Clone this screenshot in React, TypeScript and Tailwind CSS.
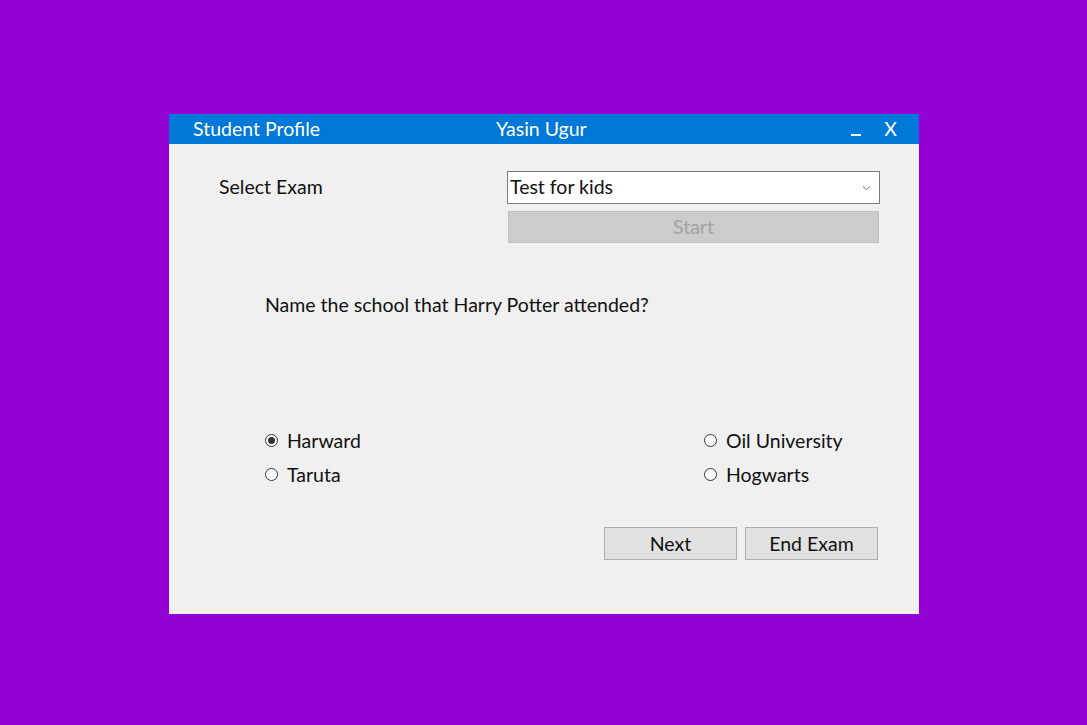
import React from "react";

const font = { fontFamily: "Lato, 'Noto Sans', sans-serif" };

function Radio({ label, checked }: { label: string; checked?: boolean }) {
  return (
    <label className="flex items-center gap-[9px] h-[34px] text-[19.5px] text-[#111]">
      <span className="w-[13px] h-[13px] rounded-full border border-[#333] bg-white flex items-center justify-center">
        {checked && <span className="w-[7px] h-[7px] rounded-full bg-[#333]" />}
      </span>
      <span>{label}</span>
    </label>
  );
}

export default function App() {
  return (
    <div className="min-h-screen bg-[#9400d3] pt-[114px] pl-[169px]" style={font}>
      <div className="w-[750px] h-[500px] bg-[#f0f0f0] flex flex-col">
        {/* Title bar */}
        <div className="h-[30px] bg-[#0078d7] text-white text-[19.5px] flex items-center pl-[24px] pr-[22px]">
          <span className="w-[303px]">Student Profile</span>
          <span className="flex-1">Yasin Ugur</span>
          <span className="w-[10px] h-[2px] bg-white mt-[12px] mr-[23px]" />
          <span className="leading-none">X</span>
        </div>

        {/* Exam select */}
        <div className="flex items-center mt-[27px] pl-[50px]">
          <span className="w-[288px] text-[19.5px] text-[#111] -mt-[2px]">Select Exam</span>
          <div className="w-[373px] h-[33px] bg-white border border-[#7a7a7a] flex items-center pl-[2px] pr-[8px] text-[19.5px] text-[#111]">
            <span className="flex-1 -mt-[2px]">Test for kids</span>
            <svg width="9" height="6" viewBox="0 0 9 6" fill="none">
              <path d="M1 1.5 L4.5 4.5 L8 1.5" stroke="#666" strokeWidth="1" />
            </svg>
          </div>
        </div>
        <div className="pl-[339px] mt-[7px]">
          <button className="w-[371px] h-[32px] bg-[#cccccc] border border-[#bfbfbf] text-[19.5px] text-[#a3a3a3]">
            Start
          </button>
        </div>

        {/* Question */}
        <p className="pl-[96px] mt-[47px] text-[19.5px] text-[#111]">
          Name the school that Harry Potter attended?
        </p>

        {/* Answers */}
        <div className="grid grid-cols-[439px_1fr] pl-[96px] mt-[104px]">
          <Radio label="Harward" checked />
          <Radio label="Oil University" />
          <Radio label="Taruta" />
          <Radio label="Hogwarts" />
        </div>

        {/* Actions */}
        <div className="flex justify-end gap-[8px] pr-[41px] mt-[36px]">
          <button className="w-[133px] h-[33px] bg-[#e1e1e1] border border-[#adadad] text-[19.5px] text-[#111]">
            Next
          </button>
          <button className="w-[133px] h-[33px] bg-[#e1e1e1] border border-[#adadad] text-[19.5px] text-[#111]">
            End Exam
          </button>
        </div>
      </div>
    </div>
  );
}
